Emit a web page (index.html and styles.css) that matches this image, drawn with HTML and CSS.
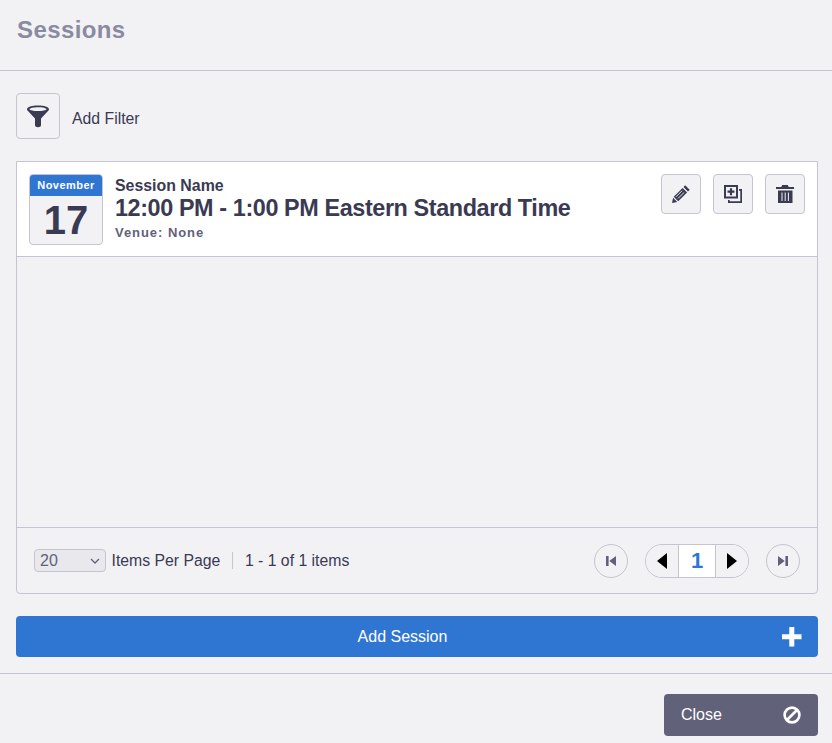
FILE: index.html
```html
<!DOCTYPE html>
<html lang="en">
<head>
<meta charset="utf-8">
<title>Sessions</title>
<link rel="stylesheet" href="styles.css">
</head>
<body>
<div class="modal">
  <header class="head"><h1>Sessions</h1></header>
  <main class="content">
    <div class="filter">
      <button class="icon-btn filter-btn" type="button" aria-label="Add Filter">
        <svg width="24" height="24" viewBox="0 0 24 24"><path fill="#3a3a52" fill-rule="evenodd" d="M12 1.500C5.800 1.500 1 3 1 5.200c0 .7.4 1.300 1 1.900l7 7.400V21c0 1.500 1.200 2.200 3 2.200s3-.7 3-2.200v-6.500l7-7.400c.6-.6 1-1.200 1-1.900C23 3 18.200 1.500 12 1.500zM12 3.300c4.600 0 8 .9 8.600 1.900-.6 1-4 1.900-8.600 1.900s-8-.9-8.600-1.900c.6-1 4-1.900 8.600-1.900z"/></svg>
      </button>
      <span class="filter-label">Add Filter</span>
    </div>
    <section class="card">
      <article class="row">
        <div class="date">
          <div class="month">November</div>
          <div class="day">17</div>
        </div>
        <div class="info">
          <div class="name">Session Name</div>
          <div class="time">12:00 PM - 1:00 PM Eastern Standard Time</div>
          <div class="venue">Venue: None</div>
        </div>
        <div class="actions">
          <button class="icon-btn action" type="button" aria-label="Edit">
            <svg width="20" height="20" viewBox="0 0 20 20"><path fill="#3a3a52" d="M14.200 1.300 18.700 5.800 17 7.500 12.500 3zM11.600 3.900 16.100 8.400 7.200 17.300 2.700 12.800zM2.100 13.800 6.200 17.900 1 19z"/><path stroke="#fff" stroke-width=".9" d="M11 6.800 5 12.800M13 8.500 7 14.500"/></svg>
          </button>
          <button class="icon-btn action" type="button" aria-label="Duplicate">
            <svg width="20" height="20" viewBox="0 0 20 20"><path fill="#3a3a52" fill-rule="evenodd" d="M1 1h14v13.500H1zM3 3v9.500h10V3z"/><path fill="#3a3a52" d="M6.900 4.200h2.200v2.400h2.400v2.200H9.100v2.400H6.900V8.800H4.500V6.600h2.400zM16 5h3v14H5v-3h1.700v1.300h10.600V6.700H16z"/></svg>
          </button>
          <button class="icon-btn action" type="button" aria-label="Delete">
            <svg width="20" height="20" viewBox="0 0 20 20"><path fill="#3a3a52" d="M7.200 1h5.600l.9 2H19v2H1V3h5.300zM3 6.500h14.500V19H3z"/><path stroke="#f2f2f5" stroke-width="1" d="M7 8.500v8.500M10.200 8.500v8.500M13.400 8.500v8.500"/></svg>
          </button>
        </div>
      </article>
      <div class="empty"></div>
      <footer class="pager">
        <div class="pager-left">
          <span class="size-wrap">
            <select class="size" aria-label="Items Per Page"><option>20</option></select>
            <svg class="chev" width="10" height="6" viewBox="0 0 10 6"><path fill="none" stroke="#62617a" stroke-width="1.300" d="M1 1l4 4 4-4"/></svg>
          </span>
          <span class="per-page">Items Per Page</span>
          <span class="count">1 - 1 of 1 items</span>
        </div>
        <nav class="pager-right">
          <button class="round" type="button" aria-label="First page">
            <svg width="12" height="12" viewBox="0 0 12 12"><path fill="#62617a" d="M1 1h2.600v10H1zM11 1v10L4.300 6z"/></svg>
          </button>
          <div class="pages">
            <button class="nav prev" type="button" aria-label="Previous page">
              <svg width="12" height="16" viewBox="0 0 12 16"><path d="M11 0v16L1 8z"/></svg>
            </button>
            <span class="current">1</span>
            <button class="nav next" type="button" aria-label="Next page">
              <svg width="12" height="16" viewBox="0 0 12 16"><path d="M1 0v16l10-8z"/></svg>
            </button>
          </div>
          <button class="round" type="button" aria-label="Last page">
            <svg width="12" height="12" viewBox="0 0 12 12"><path fill="#62617a" d="M1 1v10L7.700 6zM8.400 1H11v10H8.400z"/></svg>
          </button>
        </nav>
      </footer>
    </section>
    <button class="add" type="button">
      <span>Add Session</span>
      <svg class="add-icon" width="20" height="20" viewBox="0 0 20 20"><path fill="#fff" d="M7.300 0h5v7.300h7.200v5h-7.200v7.200h-5v-7.200H0v-5h7.300z"/></svg>
    </button>
  </main>
  <footer class="foot">
    <button class="close" type="button">
      <span>Close</span>
      <svg width="18" height="18" viewBox="0 0 18 18"><circle cx="9" cy="9" r="7.400" fill="none" stroke="#fff" stroke-width="2.600"/><path stroke="#fff" stroke-width="2.600" d="M4 14 14 4"/></svg>
    </button>
  </footer>
</div>
</body>
</html>
```
FILE: styles.css
```css
* { box-sizing: border-box; }
html, body { margin: 0; padding: 0; }
body {
  background: #f2f2f5;
  color: #3a3a52;
  font-family: "Liberation Sans", Arial, sans-serif;
  font-size: 16px;
}
button { font-family: inherit; cursor: pointer; padding: 0; }
.modal { width: 832px; height: 743px; overflow: hidden; }
.head {
  height: 71px;
  padding: 16px 16px 0 17px;
  border-bottom: 1px solid #c5c4d0;
}
.head h1 {
  margin: 0;
  font-size: 24px;
  line-height: 28px;
  font-weight: 700;
  color: #8b8a9f;
  letter-spacing: .4px;
}
.content { padding: 22px 14px 16px 16px; border-bottom: 1px solid #c5c4d0; height: 603px; }
.icon-btn {
  display: flex;
  align-items: center;
  justify-content: center;
  background: #f2f2f5;
  border: 1px solid #c5c4d0;
  border-radius: 4px;
}
.filter { display: flex; align-items: center; gap: 12px; height: 46px; }
.filter-btn { width: 44px; height: 46px; }
.filter-label { font-size: 15.8px; margin-top: 6px; }
.card {
  margin-top: 22px;
  height: 433px;
  border: 1px solid #c5c4d0;
  border-radius: 0 0 4px 4px;
  display: flex;
  flex-direction: column;
}
.row {
  height: 95px;
  background: #fff;
  border-bottom: 1px solid #c5c4d0;
  padding: 12px 12px 0;
  display: flex;
  align-items: flex-start;
}
.date {
  width: 74px;
  height: 71px;
  background: #f2f2f5;
  border: 1px solid #c5c4d0;
  border-radius: 4px;
  overflow: hidden;
  text-align: center;
  flex: none;
}
.month {
  margin: -1px -1px 0;
  height: 22px;
  background: #2f76d2;
  color: #fff;
  font-size: 11px;
  font-weight: 700;
  line-height: 22px;
  letter-spacing: .45px;
}
.day { font-size: 40px; font-weight: 700; line-height: 48px; }
.info { margin-left: 12px; flex: 1; }
.name { font-size: 15.9px; font-weight: 700; line-height: 19px; margin-top: 2px; }
.time { font-size: 23.4px; letter-spacing: -.4px; font-weight: 700; line-height: 25px; margin-top: 1px; }
.venue { font-size: 13px; font-weight: 700; line-height: 24px; color: #62617a; letter-spacing: .95px; }
.actions { display: flex; gap: 12px; }
.action { width: 40px; height: 40px; }
.empty { flex: 1; }
.pager {
  height: 66px;
  border-top: 1px solid #c5c4d0;
  padding: 0 17px;
  display: flex;
  align-items: center;
  justify-content: space-between;
}
.pager-left { display: flex; align-items: center; font-size: 15.8px; }
.size-wrap { position: relative; display: flex; }
.size {
  appearance: none;
  width: 72px;
  height: 23px;
  background: #e8e8ed;
  border: 1px solid #c5c4d0;
  border-radius: 4px;
  color: #62617a;
  font-family: inherit;
  font-size: 16px;
  padding: 0 0 0 5px;
}
.chev { position: absolute; right: 6px; top: 9px; pointer-events: none; }
.per-page { margin-left: 5.500px; }
.count { margin-left: 11.500px; padding-left: 12px; border-left: 1px solid #c5c4d0; line-height: 17px; }
.pager-right { display: flex; align-items: center; gap: 17px; }
.round {
  width: 34px;
  height: 34px;
  border: 1px solid #c5c4d0;
  border-radius: 50%;
  background: #f2f2f5;
  display: flex;
  align-items: center;
  justify-content: center;
}
.pages {
  display: flex;
  height: 34px;
  width: 104px;
  border: 1px solid #c5c4d0;
  border-radius: 17px;
  overflow: hidden;
}
.nav {
  flex: 1;
  border: 0;
  background: #f2f2f5;
  display: flex;
  align-items: center;
  justify-content: center;
}
.current {
  width: 38px;
  background: #fff;
  border-left: 1px solid #c5c4d0;
  border-right: 1px solid #c5c4d0;
  color: #2f76d2;
  font-size: 22px;
  font-weight: 700;
  line-height: 32px;
  text-align: center;
}
.add {
  margin-top: 22px;
  width: 802px;
  height: 41px;
  background: #2f76d2;
  color: #fff;
  border: 0;
  border-radius: 4px;
  font-size: 16px;
  position: relative;
  display: flex;
  align-items: center;
  justify-content: center;
  padding-right: 29px;
}
.add-icon { position: absolute; right: 16px; top: 11px; }
.foot { display: flex; justify-content: flex-end; padding: 20px 14px 0 0; }
.close {
  width: 154px;
  height: 42px;
  background: #62617a;
  color: #fff;
  border: 0;
  border-radius: 4px;
  font-size: 16px;
  display: flex;
  align-items: center;
  justify-content: space-between;
  padding: 0 17px;
}
```
